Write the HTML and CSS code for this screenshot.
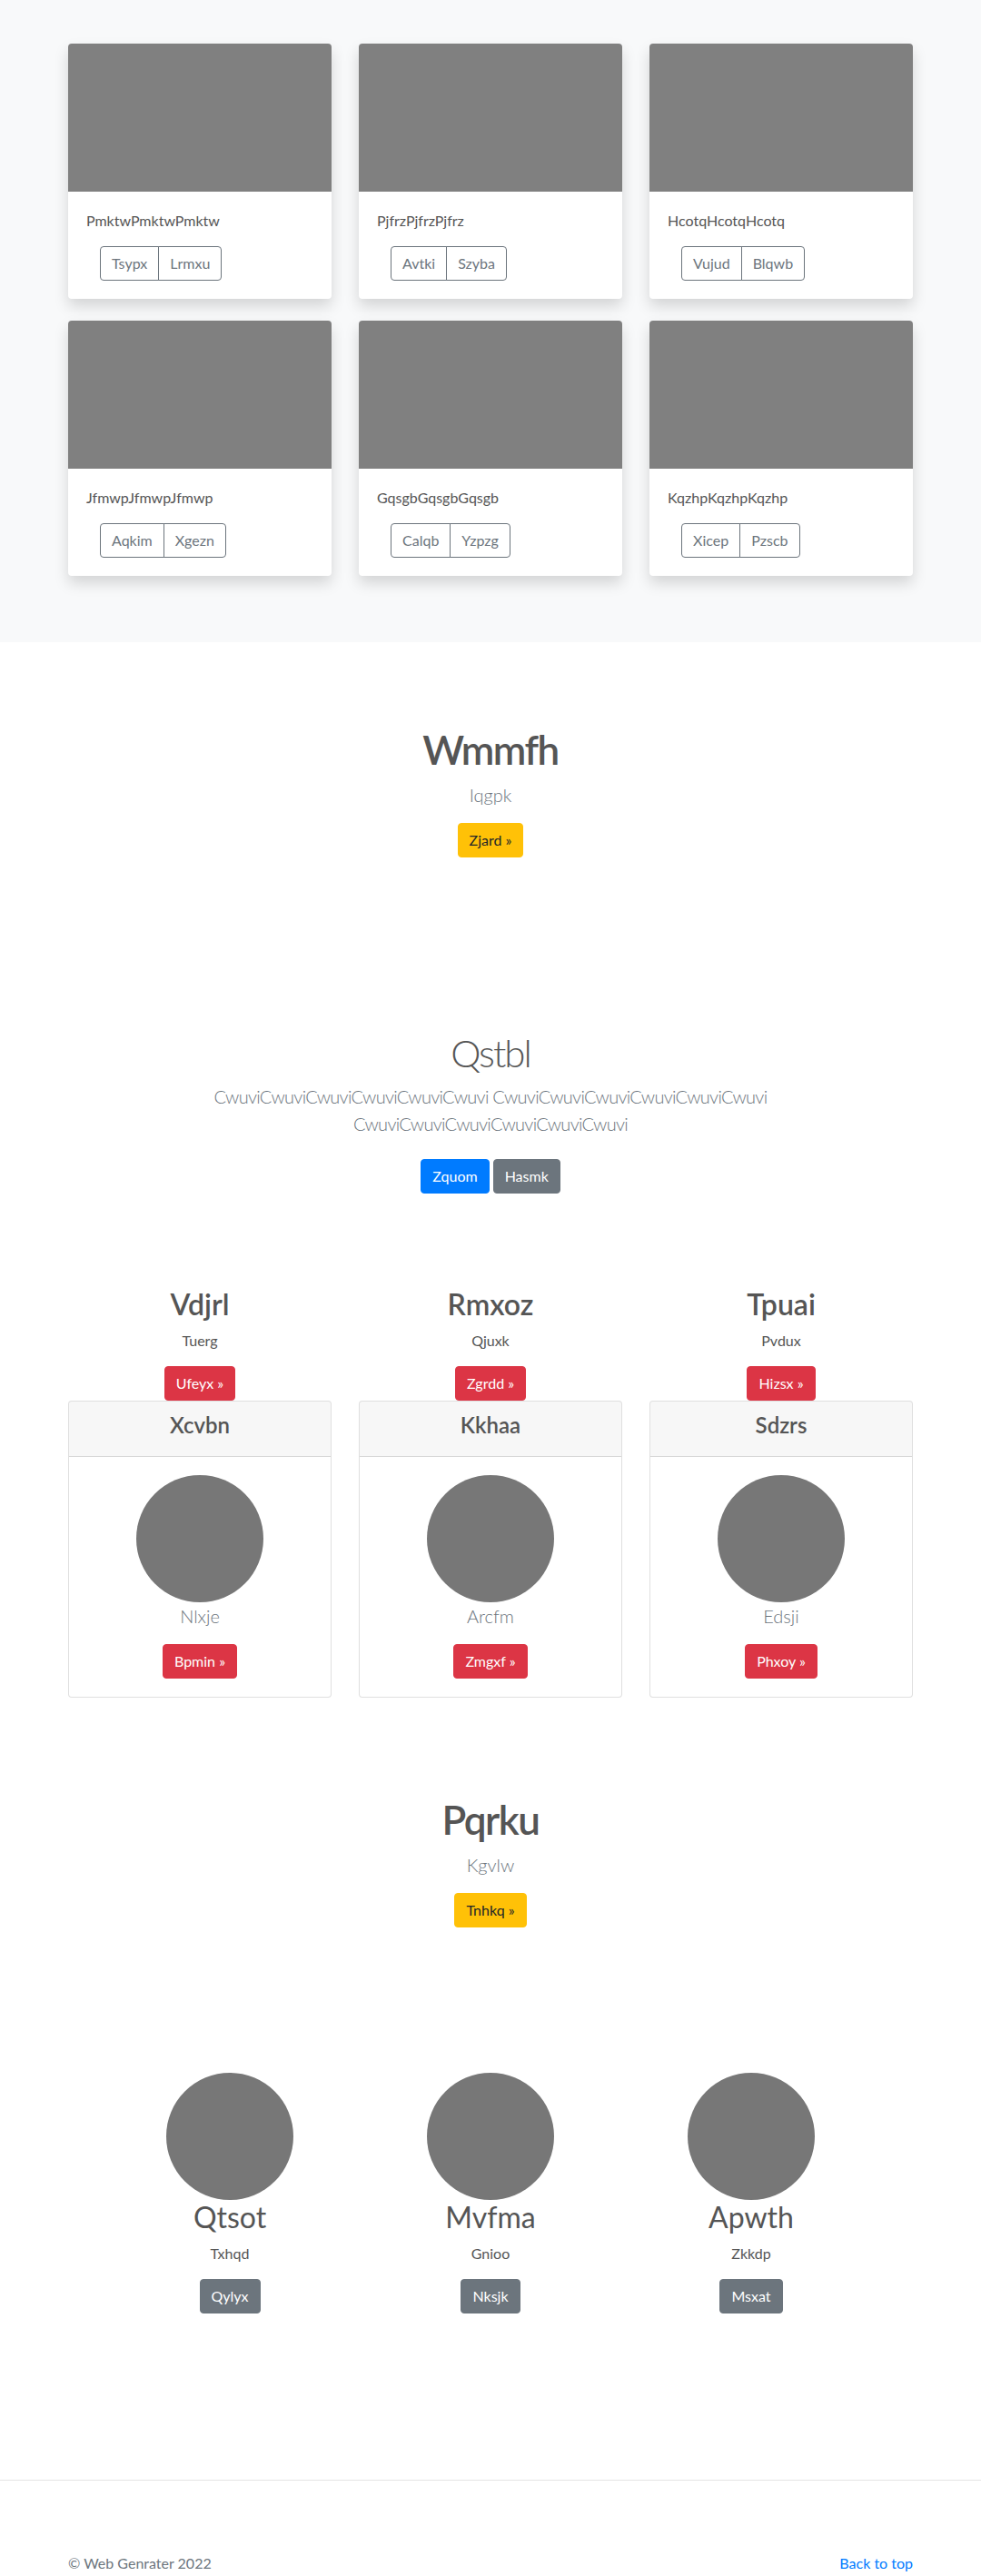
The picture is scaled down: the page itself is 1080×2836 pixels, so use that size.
FILE: index.html
```html
<!DOCTYPE html>
<html lang="en">
<head>
<meta charset="utf-8">
<title>Web Genrater</title>
<link rel="stylesheet" href="styles.css">
</head>
<body>
<section class="album">
  <div class="container album-grid">
    <div class="card">
      <div class="thumb"></div>
      <div class="card-body">
        <p class="card-text">PmktwPmktwPmktw</p>
        <div class="btn-group"><button type="button" class="btn btn-outline">Tsypx</button><button type="button" class="btn btn-outline">Lrmxu</button></div>
      </div>
    </div>
    <div class="card">
      <div class="thumb"></div>
      <div class="card-body">
        <p class="card-text">PjfrzPjfrzPjfrz</p>
        <div class="btn-group"><button type="button" class="btn btn-outline">Avtki</button><button type="button" class="btn btn-outline">Szyba</button></div>
      </div>
    </div>
    <div class="card">
      <div class="thumb"></div>
      <div class="card-body">
        <p class="card-text">HcotqHcotqHcotq</p>
        <div class="btn-group"><button type="button" class="btn btn-outline">Vujud</button><button type="button" class="btn btn-outline">Blqwb</button></div>
      </div>
    </div>
    <div class="card">
      <div class="thumb"></div>
      <div class="card-body">
        <p class="card-text">JfmwpJfmwpJfmwp</p>
        <div class="btn-group"><button type="button" class="btn btn-outline">Aqkim</button><button type="button" class="btn btn-outline">Xgezn</button></div>
      </div>
    </div>
    <div class="card">
      <div class="thumb"></div>
      <div class="card-body">
        <p class="card-text">GqsgbGqsgbGqsgb</p>
        <div class="btn-group"><button type="button" class="btn btn-outline">Calqb</button><button type="button" class="btn btn-outline">Yzpzg</button></div>
      </div>
    </div>
    <div class="card">
      <div class="thumb"></div>
      <div class="card-body">
        <p class="card-text">KqzhpKqzhpKqzhp</p>
        <div class="btn-group"><button type="button" class="btn btn-outline">Xicep</button><button type="button" class="btn btn-outline">Pzscb</button></div>
      </div>
    </div>
  </div>
</section>

<section class="hero hero-first">
  <h1 class="hero-title">Wmmfh</h1>
  <p class="lead muted">Iqgpk</p>
  <div class="actions"><a class="btn btn-warning" href="#">Zjard »</a></div>
</section>

<section class="jumbo">
  <h1 class="jumbo-title">Qstbl</h1>
  <p class="lead muted jumbo-text">CwuviCwuviCwuviCwuviCwuviCwuvi CwuviCwuviCwuviCwuviCwuviCwuvi CwuviCwuviCwuviCwuviCwuviCwuvi</p>
  <div class="actions actions-spaced">
    <a class="btn btn-primary" href="#">Zquom</a>
    <a class="btn btn-secondary" href="#">Hasmk</a>
  </div>
</section>

<section class="features">
  <div class="container feature-grid">
    <div class="feature">
      <h2 class="feature-title">Vdjrl</h2>
      <p class="feature-text">Tuerg</p>
      <div class="actions"><a class="btn btn-danger" href="#">Ufeyx »</a></div>
      <div class="plan">
        <div class="plan-header"><h4 class="plan-title">Xcvbn</h4></div>
        <div class="plan-body">
          <div class="avatar"></div>
          <p class="lead muted">Nlxje</p>
          <div class="actions"><a class="btn btn-danger" href="#">Bpmin »</a></div>
        </div>
      </div>
    </div>
    <div class="feature">
      <h2 class="feature-title">Rmxoz</h2>
      <p class="feature-text">Qjuxk</p>
      <div class="actions"><a class="btn btn-danger" href="#">Zgrdd »</a></div>
      <div class="plan">
        <div class="plan-header"><h4 class="plan-title">Kkhaa</h4></div>
        <div class="plan-body">
          <div class="avatar"></div>
          <p class="lead muted">Arcfm</p>
          <div class="actions"><a class="btn btn-danger" href="#">Zmgxf »</a></div>
        </div>
      </div>
    </div>
    <div class="feature">
      <h2 class="feature-title">Tpuai</h2>
      <p class="feature-text">Pvdux</p>
      <div class="actions"><a class="btn btn-danger" href="#">Hizsx »</a></div>
      <div class="plan">
        <div class="plan-header"><h4 class="plan-title">Sdzrs</h4></div>
        <div class="plan-body">
          <div class="avatar"></div>
          <p class="lead muted">Edsji</p>
          <div class="actions"><a class="btn btn-danger" href="#">Phxoy »</a></div>
        </div>
      </div>
    </div>
  </div>
</section>

<section class="hero hero-second">
  <h1 class="hero-title">Pqrku</h1>
  <p class="lead muted">Kgvlw</p>
  <div class="actions"><a class="btn btn-warning" href="#">Tnhkq »</a></div>
</section>

<section class="marketing">
  <div class="marketing-grid">
    <div class="mk-col">
      <div class="avatar"></div>
      <h2 class="mk-title">Qtsot</h2>
      <p class="mk-text">Txhqd</p>
      <div class="actions"><a class="btn btn-secondary" href="#">Qylyx</a></div>
    </div>
    <div class="mk-col">
      <div class="avatar"></div>
      <h2 class="mk-title">Mvfma</h2>
      <p class="mk-text">Gnioo</p>
      <div class="actions"><a class="btn btn-secondary" href="#">Nksjk</a></div>
    </div>
    <div class="mk-col">
      <div class="avatar"></div>
      <h2 class="mk-title">Apwth</h2>
      <p class="mk-text">Zkkdp</p>
      <div class="actions"><a class="btn btn-secondary" href="#">Msxat</a></div>
    </div>
  </div>
</section>

<footer class="footer">
  <div class="container footer-row">
    <p class="footer-copy">© Web Genrater 2022</p>
    <p class="footer-top"><a href="#">Back to top</a></p>
  </div>
</footer>
</body>
</html>
```

FILE: styles.css
```css
* {
  box-sizing: border-box;
}

html,
body {
  margin: 0;
  padding: 0;
}

body {
  font-family: "Segoe UI", Lato, "Liberation Sans", sans-serif;
  font-size: 16px;
  line-height: 1.5;
  color: #555;
  background: #fff;
}

.container {
  width: 930px;
  margin: 0 auto;
}

/* ---------- buttons ---------- */
.btn {
  display: inline-block;
  font-family: inherit;
  font-size: 16px;
  font-weight: 400;
  line-height: 24px;
  padding: 6px 12px;
  border: 1px solid transparent;
  border-radius: 4px;
  text-decoration: none;
  text-align: center;
  cursor: pointer;
  background: transparent;
}

.btn-outline {
  color: #6c757d;
  border-color: #6c757d;
}

.btn-warning {
  color: #212529;
  background: #ffc107;
  border-color: #ffc107;
}

.btn-primary {
  color: #fff;
  background: #007bff;
  border-color: #007bff;
}

.btn-secondary {
  color: #fff;
  background: #6c757d;
  border-color: #6c757d;
}

.btn-danger {
  color: #fff;
  background: #dc3545;
  border-color: #dc3545;
}

.btn-group {
  display: inline-flex;
  margin-left: 15px;
}

.btn-group .btn:first-child {
  border-top-right-radius: 0;
  border-bottom-right-radius: 0;
}

.btn-group .btn + .btn {
  margin-left: -1px;
  border-top-left-radius: 0;
  border-bottom-left-radius: 0;
}

.actions {
  display: flex;
  justify-content: center;
  gap: 4px;
}

.actions-spaced {
  padding: 8px 0;
}

.lead {
  font-size: 20px;
  font-weight: 300;
  line-height: 30px;
  margin: 0 0 16px;
}

.muted {
  color: #6c757d;
}

/* ---------- album ---------- */
.album {
  background: #f8f9fa;
  padding: 48px 0 73px;
}

.album-grid {
  display: grid;
  grid-template-columns: repeat(3, 290px);
  column-gap: 30px;
  row-gap: 24px;
}

.card {
  background: #fff;
  border-radius: 4px;
  overflow: hidden;
  box-shadow: 0 8px 16px rgba(0, 0, 0, 0.15);
}

.thumb {
  height: 163px;
  background: #808080;
}

.card-body {
  padding: 20px;
}

.card-text {
  margin: 0 0 16px;
  line-height: 24px;
}

/* ---------- hero ---------- */
.hero {
  text-align: center;
}

.hero-first {
  padding-top: 92px;
}

.hero-second {
  padding-top: 108px;
}

.hero-title {
  font-size: 44px;
  font-weight: 600;
  line-height: 1.2;
  letter-spacing: -1.5px;
  margin: 0 0 8px;
  color: #555;
}

/* ---------- jumbo ---------- */
.jumbo {
  text-align: center;
  padding-top: 190px;
}

.jumbo-title {
  font-size: 42px;
  font-weight: 300;
  line-height: 1.2;
  letter-spacing: -2px;
  margin: 0 0 8px;
  color: #555;
}

.jumbo-text {
  width: 640px;
  margin: 0 auto 16px;
  letter-spacing: -0.7px;
}

/* ---------- features ---------- */
.features {
  padding-top: 95px;
}

.feature-grid {
  display: grid;
  grid-template-columns: repeat(3, 290px);
  column-gap: 30px;
}

.feature {
  text-align: center;
}

.feature-title {
  font-size: 32px;
  font-weight: 600;
  line-height: 1.2;
  margin: 0 0 8px;
}

.feature-text {
  margin: 0 0 16px;
  line-height: 24px;
}

.plan {
  border: 1px solid rgba(0, 0, 0, 0.125);
  border-radius: 4px;
  background: #fff;
  overflow: hidden;
}

.plan-header {
  padding: 12px 20px;
  background: rgba(0, 0, 0, 0.03);
  border-bottom: 1px solid rgba(0, 0, 0, 0.125);
}

.plan-title {
  font-size: 24px;
  font-weight: 600;
  line-height: 1.2;
  margin: 0 0 8px;
}

.plan-body {
  padding: 20px;
}

.avatar {
  width: 140px;
  height: 140px;
  border-radius: 50%;
  background: #777;
  margin: 0 auto;
}

/* ---------- marketing ---------- */
.marketing {
  padding-top: 160px;
}

.marketing-grid {
  display: grid;
  grid-template-columns: repeat(3, 287px);
  justify-content: center;
}

.mk-col {
  text-align: center;
}

.mk-title {
  font-size: 32px;
  font-weight: 400;
  line-height: 1.2;
  margin: 0 0 8px;
}

.mk-text {
  margin: 0 0 16px;
  line-height: 24px;
}

/* ---------- footer ---------- */
.footer {
  margin-top: 183px;
  border-top: 1px solid #e5e5e5;
  padding-top: 79px;
}

.footer-row {
  display: flex;
  justify-content: space-between;
}

.footer-copy,
.footer-top {
  margin: 0;
  line-height: 24px;
  color: #6c757d;
}

.footer-top a {
  color: #007bff;
  text-decoration: none;
}
```
